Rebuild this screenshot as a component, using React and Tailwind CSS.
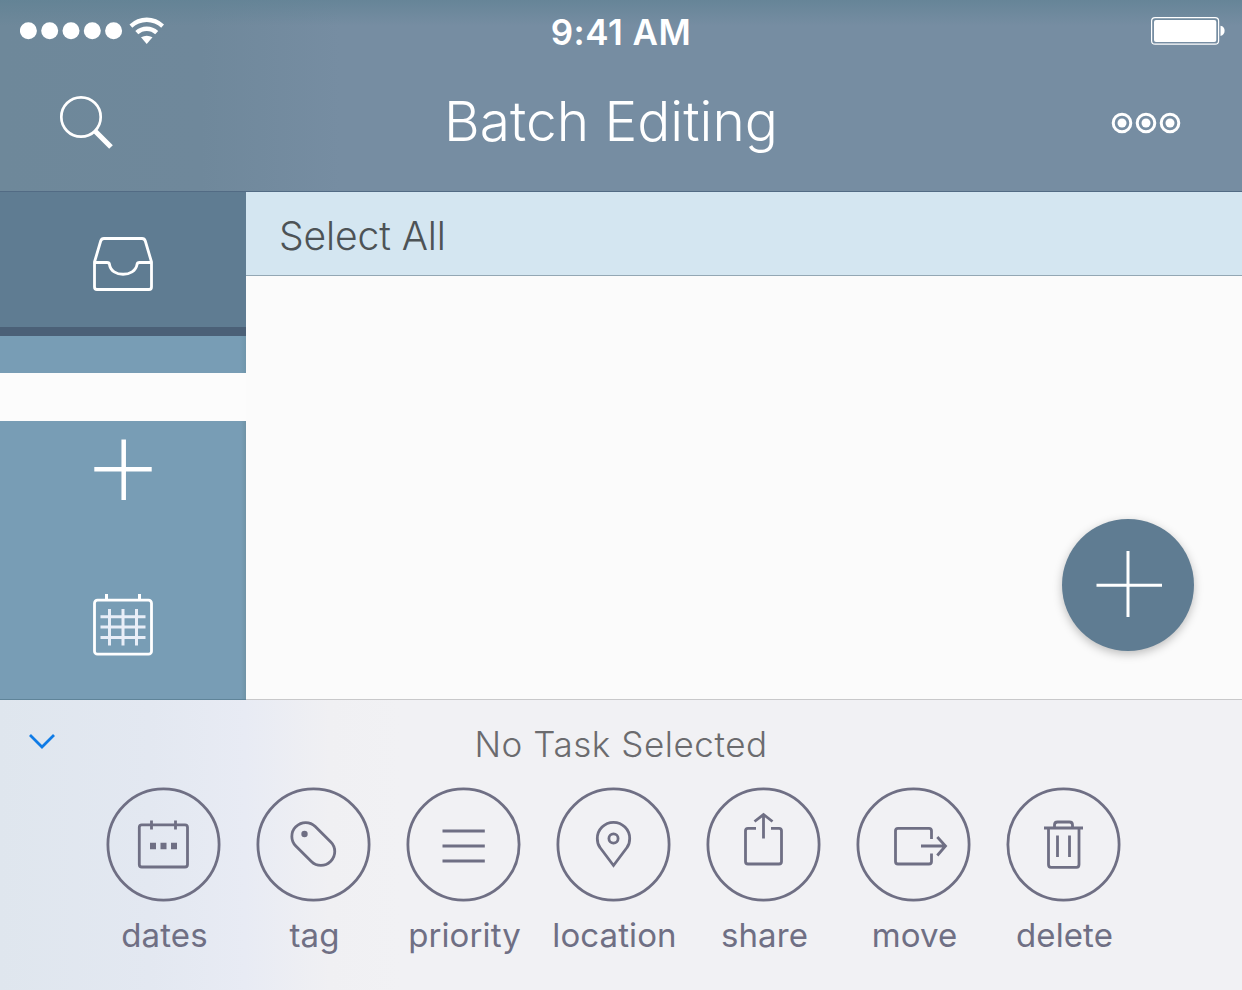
function SignalWifi() {
  return (
    <svg className="ml-5 mt-[16px] h-[30px] w-[148px]" viewBox="20 16 148 30" fill="#fff">
      {[28.4, 49.7, 71, 92.3, 113.6].map((x) => (
        <circle key={x} cx={x} cy="30.7" r="8.5" />
      ))}
      <path d="M129.5 24.6 A24.5 24.5 0 0 1 164 24.6 L161.2 27.8 A20.6 20.6 0 0 0 132.3 27.8 Z" />
      <path d="M135.3 31 A16.5 16.5 0 0 1 158.2 31 L155.2 34.3 A12.2 12.2 0 0 0 138.3 34.3 Z" />
      <path d="M141 37.3 Q146.700 34.200 152.500 37.300 L146.700 44 Z" />
    </svg>
  );
}

function Battery() {
  return (
    <svg className="mr-[16px] mt-[16px] h-[30px] w-[76px]" viewBox="1150 16 76 30" fill="#fff">
      <rect x="1151.600" y="17.600" width="67" height="26.600" rx="3.500" fill="none" stroke="#fff" strokeWidth="1.200" />
      <rect x="1154" y="20" width="62.300" height="22" rx="2" />
      <path d="M1220.500 25.800 C1226 26.500 1226 35.200 1220.500 36 Z" />
    </svg>
  );
}

function SearchIcon() {
  return (
    <svg className="h-[56px] w-[56px]" viewBox="59 94 56 56" fill="none" stroke="#fff">
      <circle cx="81" cy="117" r="19.700" strokeWidth="2.700" />
      <path d="M95 131 L111 147" strokeWidth="5.200" />
    </svg>
  );
}

function MoreIcon() {
  return (
    <svg className="mt-[2px] h-[24px] w-[72px]" viewBox="1110 111 72 24">
      {[1122, 1146, 1170].map((x) => (
        <g key={x}>
          <circle cx={x} cy="123" r="8.800" fill="none" stroke="#fff" strokeWidth="3" />
          <circle cx={x} cy="123" r="4.500" fill="#fff" />
        </g>
      ))}
    </svg>
  );
}

function InboxIcon() {
  return (
    <svg className="h-[56px] w-[62px]" viewBox="92 236 62 56" fill="none" stroke="#fff" strokeWidth="2.800" strokeLinejoin="round">
      <path d="M94.500 262 L100.700 241 Q101.500 238.500 104 238.500 H142 Q144.500 238.500 145.300 241 L151.500 262 V287 Q151.500 289.500 149 289.500 H97 Q94.500 289.500 94.500 287 Z" />
      <path d="M94.500 262.500 H107 Q109.300 262.500 109.500 264.500 C111 277.500 135 277.500 137 264.500 Q137.300 262.500 139.500 262.500 H151.500" />
    </svg>
  );
}

function PlusIcon() {
  return (
    <svg className="h-[64px] w-[62px]" viewBox="92 437 62 64" stroke="#fff" strokeWidth="4.500">
      <path d="M94.300 469.200 H151.700 M123.700 439.500 V500" />
    </svg>
  );
}

function CalendarIcon() {
  return (
    <svg className="h-[64px] w-[62px]" viewBox="92 593 62 64" fill="none" stroke="#fff">
      <rect x="94.500" y="600.200" width="57" height="54" rx="3" strokeWidth="2.800" />
      <path d="M106.500 594 V600 M139.500 594 V600" strokeWidth="3" />
      <path d="M100.500 616.700 H145.500 M100.500 627 H145.500 M100.500 637.500 H145.500 M109.500 609 V645.500 M123 609 V645.500 M136.500 609 V645.500" stroke="#e8eef8" strokeWidth="3" />
    </svg>
  );
}

const actions = [
  {
    label: "dates",
    art: (
      <>
        <rect x="139.300" y="824.800" width="48.200" height="42.200" rx="2.500" />
        <path d="M151.500 820.500 V829.500 M175.500 820.500 V829.500" />
        <path d="M150 846 H156 M160.500 846 H166.500 M171 846 H177" strokeWidth="6.500" />
      </>
    ),
  },
  {
    label: "tag",
    art: (
      <>
        <rect x="138.800" y="830.250" width="49" height="27.500" rx="13.500" transform="rotate(45 163.300 844)" />
        <circle cx="154.500" cy="834" r="3.200" fill="#6f6f84" stroke="none" />
      </>
    ),
  },
  { label: "priority", art: <path d="M142.500 831 H184.800 M142.500 846 H184.800 M142.500 861 H184.800" /> },
  {
    label: "location",
    art: (
      <>
        <path d="M163.500 865.500 L150 847.500 C147.500 844.500 147.300 841.500 147.300 838.500 A16.200 16.200 0 0 1 179.700 838.500 C179.700 841.500 179.500 844.500 177 847.500 Z" />
        <circle cx="163.500" cy="838.500" r="4.600" />
      </>
    ),
  },
  {
    label: "share",
    art: (
      <>
        <path d="M156 828.300 H148 Q145.500 828.300 145.500 830.800 V861.500 Q145.500 864 148 864 H179 Q181.500 864 181.500 861.500 V830.800 Q181.500 828.300 179 828.300 H171" />
        <path d="M163.500 838.500 V815 M154.500 821.500 L163.500 814.500 L172.500 821.500" />
      </>
    ),
  },
  {
    label: "move",
    art: (
      <>
        <path d="M181.500 839 V830.800 Q181.500 828.300 179 828.300 H148 Q145.500 828.300 145.500 830.800 V861.500 Q145.500 864 148 864 H179 Q181.500 864 181.500 861.500 V853.500" />
        <path d="M171 846 H195 M187.300 837 L195.500 846 L187.300 855.500" />
      </>
    ),
  },
  {
    label: "delete",
    art: (
      <>
        <path d="M144 828 H183 M148.500 828 V864.500 Q148.500 867.300 151 867.300 H176.500 Q179 867.300 179 864.500 V828 M154.500 828 V825 Q154.500 822 157.500 822 H169.500 Q172.500 822 172.500 825 V828" />
        <path d="M157.500 835.500 V857 M169.500 835.500 V857" />
      </>
    ),
  },
];

function Action({ label, children }) {
  return (
    <button className="flex w-[150px] shrink-0 flex-col items-center">
      <svg className="h-[116px] w-[150px]" viewBox="89 787 150 116" fill="none" stroke="#6f6f84" strokeWidth="2.800">
        <circle cx="163.500" cy="844.500" r="55.600" />
        {children}
      </svg>
      <span className="mt-[12px] whitespace-nowrap pl-px text-[33px] leading-[40px] tracking-[0.1px] text-[#6f6f84]">{label}</span>
    </button>
  );
}

export default function App() {
  return (
    <div className="flex h-[990px] w-[1242px] flex-col overflow-hidden bg-[#fbfbfb] font-['Inter',sans-serif]">
      <header className="h-[192px] shrink-0 border-b border-[#526b84] bg-[linear-gradient(180deg,#5f8193b0_0,#65849700_26px),linear-gradient(90deg,#6e889a_0,#6f889b_200px,#768da2_340px,#768da2_100%)]">
        <div className="grid h-[62px] grid-cols-[1fr_auto_1fr] items-start">
          <SignalWifi />
          <span className="mt-[11px] whitespace-nowrap text-[35px] font-semibold leading-[42px] tracking-[0.5px] text-white">9:41 AM</span>
          <div className="flex justify-end"><Battery /></div>
        </div>
        <div className="flex h-[120px] items-center justify-between pl-[59px] pr-[60px]">
          <SearchIcon />
          <h1 className="mb-[3px] mr-[3px] whitespace-nowrap text-[55px] font-light leading-[64px] text-white">Batch Editing</h1>
          <MoreIcon />
        </div>
      </header>

      <main className="relative flex h-[508px] shrink-0">
        <nav className="flex w-[246px] flex-col">
          <div className="flex h-[144px] items-center justify-center border-b-[9px] border-[#4b6077] bg-[#5f7c92] pt-[9px]">
            <InboxIcon />
          </div>
          <div className="h-[37px] bg-[linear-gradient(270deg,#7096ab_0,#789db5_6px)]" />
          <div className="h-[48px] bg-[#fcfcfc]" />
          <div className="flex h-[279px] flex-col items-center border-b border-[#5f8499] bg-[linear-gradient(270deg,#7093a6_0,#789db5_5px)] pt-[16px]">
            <PlusIcon />
            <div className="mt-[92px] flex"><CalendarIcon /></div>
          </div>
        </nav>
        <section className="flex flex-1 flex-col border-b border-[#c8c8ca]">
          <div className="flex h-[84px] items-center border-b border-[#93a7b4] bg-[#d4e6f1] pl-[33px]">
            <span className="whitespace-nowrap pt-[4px] text-[39px] font-light leading-[48px] tracking-[-0.1px] text-[#4d5356]">Select All</span>
          </div>
        </section>
        <button className="absolute left-[1062px] top-[327px] flex h-[132px] w-[132px] items-center justify-center rounded-full bg-[#5f7c92] shadow-[0_3px_10px_rgba(0,0,0,0.25)]">
          <svg className="h-[68px] w-[68px]" viewBox="0 0 68 68" stroke="#fff" strokeWidth="3">
            <path d="M2.500 34.200 H68 M34 0 V66" />
          </svg>
        </button>
      </main>

      <footer className="h-[290px] shrink-0 bg-[linear-gradient(90deg,#dfe6ee_0,#e3e8f1_150px,#e8ebf4_245px,#f0f0f3_330px,#f1f1f4_400px)]">
        <div className="grid h-[87px] grid-cols-[1fr_auto_1fr] items-center">
          <svg className="mb-[5px] ml-[28px] h-[18px] w-[28px]" viewBox="28 732 28 18" fill="none" stroke="#0f7be6" strokeWidth="2.800">
            <path d="M30 735 L42 747 L54 735" />
          </svg>
          <span className="whitespace-nowrap pt-px text-[35px] font-light leading-[44px] tracking-[0.55px] text-[#6b6b6e]">No Task Selected</span>
        </div>
        <div className="flex pl-[89px]">
          {actions.map((action) => (
            <Action key={action.label} label={action.label}>{action.art}</Action>
          ))}
        </div>
      </footer>
    </div>
  );
}
